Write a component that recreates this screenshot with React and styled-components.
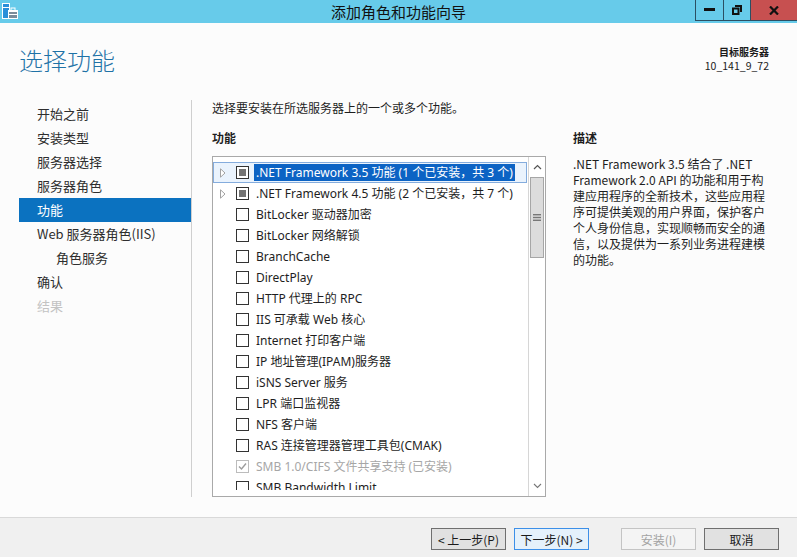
import React from 'react'
import styled, { createGlobalStyle } from 'styled-components'

const GlobalStyle = createGlobalStyle`
  html, body {
    margin: 0;
    padding: 0;
  }
  body {
    font-family: "Segoe UI", "Noto Sans", "Noto Sans CJK SC", sans-serif;
    color: #1e1e1e;
  }
`

const Window = styled.div`
  width: 797px;
  height: 557px;
  display: flex;
  flex-direction: column;
  background: #fcfcfc;
  overflow: hidden;
`

const TitleBar = styled.div`
  height: 23px;
  flex: none;
  background: #67cbea;
  display: grid;
  grid-template-columns: 1fr auto 1fr;
  align-items: start;
`

const AppIcon = styled.div`
  padding: 2px 0 0 1px;
  height: 19px;
`

const Title = styled.div`
  font-family: "Noto Sans CJK SC", sans-serif;
  font-size: 15px;
  line-height: 23px;
  color: #111;
`

const Controls = styled.div`
  justify-self: end;
  display: flex;
  height: 20px;
  border-bottom: 1px solid #2b4f63;
  border-left: 1px solid #2b4f63;
`

const CtrlButton = styled.div`
  width: ${p => p.$w}px;
  height: 20px;
  display: flex;
  align-items: center;
  justify-content: center;
  background: ${p => (p.$close ? '#c75050' : 'transparent')};
  border-right: ${p => (p.$close ? 'none' : '1px solid #2b4f63')};
`

const Main = styled.div`
  flex: 1;
  display: flex;
  flex-direction: column;
  min-height: 0;
`

const Header = styled.div`
  height: 77px;
  flex: none;
  display: flex;
  justify-content: space-between;
  align-items: flex-start;
  padding: 0 28px 0 19px;
  box-sizing: border-box;
`

const Heading = styled.h1`
  margin: 22px 0 0;
  font-family: "Noto Sans CJK SC", sans-serif;
  font-weight: 300;
  font-size: 24px;
  line-height: 30px;
  color: #1f72a6;
`

const Target = styled.div`
  margin-top: 22px;
  text-align: right;
  font-family: "Noto Sans CJK SC", sans-serif;
  color: #1a1a1a;
`

const TargetLabel = styled.div`
  font-weight: 700;
  font-size: 10px;
  line-height: 14px;
`

const TargetName = styled.div`
  font-size: 10.5px;
  line-height: 13px;
`

const Body = styled.div`
  flex: 1;
  display: flex;
  padding-bottom: 20px;
  min-height: 0;
`

const Nav = styled.nav`
  margin-left: 19px;
  width: 172px;
  flex: none;
  border-right: 1px solid #cfcfcf;
  padding-top: 2px;
`

const NavItem = styled.div`
  height: 24px;
  line-height: 24px;
  font-size: 13px;
  padding-left: ${p => (p.$sub ? 37 : 18)}px;
  font-family: "Noto Sans CJK SC", sans-serif;
  color: ${p => (p.$active ? '#fff' : p.$disabled ? '#c3c3c3' : '#2e2e2e')};
  background: ${p => (p.$active ? '#0b72c0' : 'transparent')};
`

const Content = styled.div`
  flex: 1;
  padding-left: 20px;
  display: flex;
  flex-direction: column;
  min-height: 0;
`

const Intro = styled.div`
  font-family: "Noto Sans CJK SC", sans-serif;
  font-size: 12px;
  line-height: 16px;
`

const Columns = styled.div`
  flex: 1;
  display: flex;
  gap: 27px;
  margin-top: 14px;
  min-height: 0;
`

const FeatureCol = styled.div`
  width: 334px;
  display: flex;
  flex-direction: column;
`

const DescCol = styled.div`
  width: 200px;
`

const ColHead = styled.div`
  font-family: "Noto Sans CJK SC", sans-serif;
  font-weight: 700;
  font-size: 12px;
  line-height: 16px;
  margin-bottom: 10px;
`

const ListBox = styled.div`
  flex: 1;
  border: 1px solid #a9a9a9;
  display: flex;
  overflow: hidden;
  background: #fff;
`

const Rows = styled.div`
  flex: 1;
  margin: 5px 0 6px;
  overflow: hidden;
`

const Row = styled.div`
  height: 21px;
  box-sizing: border-box;
  display: flex;
  align-items: center;
  padding-left: 4px;
  border: 1px solid ${p => (p.$selected ? '#84acdd' : 'transparent')};
  background: ${p => (p.$selected ? '#eaf3fd' : 'transparent')};
  margin-right: 1px;
`

const Expander = styled.div`
  width: 18px;
  flex: none;
  display: flex;
  align-items: center;
  padding-left: 2px;
  box-sizing: border-box;
`

const Box = styled.div`
  width: 13px;
  height: 13px;
  box-sizing: border-box;
  flex: none;
  border: 1px solid ${p => (p.$disabled ? '#bcbcbc' : '#333')};
  background: #fff;
  display: flex;
  align-items: center;
  justify-content: center;
`

const Mixed = styled.div`
  width: 7px;
  height: 7px;
  background: #737373;
`

const Label = styled.span`
  margin-left: 5px;
  padding: 0 2px;
  font-size: 12px;
  line-height: 17px;
  white-space: nowrap;
  color: ${p => (p.$selected ? '#fff' : p.$disabled ? '#a6a6a6' : '#1e1e1e')};
  background: ${p => (p.$selected ? '#0c63c4' : 'transparent')};
`

const ScrollBar = styled.div`
  width: 16px;
  flex: none;
  border-left: 1px solid #d6d6d6;
  display: flex;
  flex-direction: column;
  background: #fff;
`

const ArrowBtn = styled.div`
  height: 20px;
  flex: none;
  display: flex;
  align-items: center;
  justify-content: center;
`

const Track = styled.div`
  flex: 1;
`

const Thumb = styled.div`
  height: 81px;
  margin: 0 1px;
  background: #dcdcdc;
  border: 1px solid #a6a6a6;
  box-sizing: border-box;
  display: flex;
  align-items: center;
  justify-content: center;
`

const DescText = styled.p`
  margin: 0;
  font-family: "Noto Sans CJK SC", sans-serif;
  font-size: 12px;
  line-height: 16px;
  color: #1e1e1e;
  white-space: pre-line;
`

const Footer = styled.div`
  height: 40px;
  flex: none;
  box-sizing: border-box;
  border-top: 1px solid #d9d9d9;
  background: #f0f0f0;
  display: flex;
  justify-content: flex-end;
  align-items: flex-start;
  padding: 10px 18px 0 0;
`

const Btn = styled.button`
  width: 75px;
  height: 22px;
  box-sizing: border-box;
  margin-left: ${p => p.$gap}px;
  font-family: "Noto Sans CJK SC", sans-serif;
  font-size: 12px;
  padding: 0;
  border: 1px solid ${p => (p.$focus ? '#3c8fe8' : p.$disabled ? '#c4c4c4' : '#6f6f6f')};
  background: ${p => (p.$focus ? '#e5f1fb' : p.$disabled ? '#f4f4f4' : '#e1e1e1')};
  color: ${p => (p.$disabled ? '#a3a3a3' : '#1a1a1a')};
`

const features = [
  { label: '.NET Framework 3.5 功能 (1 个已安装，共 3 个)', expand: true, state: 'mixed', selected: true },
  { label: '.NET Framework 4.5 功能 (2 个已安装，共 7 个)', expand: true, state: 'mixed' },
  { label: 'BitLocker 驱动器加密' },
  { label: 'BitLocker 网络解锁' },
  { label: 'BranchCache' },
  { label: 'DirectPlay' },
  { label: 'HTTP 代理上的 RPC' },
  { label: 'IIS 可承载 Web 核心' },
  { label: 'Internet 打印客户端' },
  { label: 'IP 地址管理(IPAM)服务器' },
  { label: 'iSNS Server 服务' },
  { label: 'LPR 端口监视器' },
  { label: 'NFS 客户端' },
  { label: 'RAS 连接管理器管理工具包(CMAK)' },
  { label: 'SMB 1.0/CIFS 文件共享支持 (已安装)', state: 'installed' },
  { label: 'SMB Bandwidth Limit' },
]

const steps = [
  { name: '开始之前' },
  { name: '安装类型' },
  { name: '服务器选择' },
  { name: '服务器角色' },
  { name: '功能', active: true },
  { name: 'Web 服务器角色(IIS)' },
  { name: '角色服务', sub: true },
  { name: '确认' },
  { name: '结果', disabled: true },
]

const description = `.NET Framework 3.5 结合了 .NET
Framework 2.0 API 的功能和用于构
建应用程序的全新技术，这些应用程
序可提供美观的用户界面，保护客户
个人身份信息，实现顺畅而安全的通
信，以及提供为一系列业务进程建模
的功能。`

function ServerIcon() {
  return (
    <svg width="20" height="18" viewBox="0 0 20 18">
      <rect x="1" y="1" width="8" height="16" fill="#fff" />
      <rect x="2" y="2" width="6" height="14" fill="#2a8fd9" />
      <rect x="2" y="5" width="6" height="1" fill="#fff" />
      <rect x="7" y="8" width="10" height="9" fill="#fff" />
      <rect x="8" y="10" width="8" height="6" fill="#7b8c9a" />
      <rect x="10" y="6" width="4" height="3" fill="none" stroke="#fff" strokeWidth="1" />
      <rect x="8" y="12" width="8" height="1" fill="#fff" />
    </svg>
  )
}

function Triangle() {
  return (
    <svg width="6" height="10" viewBox="0 0 6 10">
      <path d="M0.5 0.8 L5 5 L0.5 9.2 Z" fill="#fff" stroke="#a2a2a2" strokeWidth="1" />
    </svg>
  )
}

function Check() {
  return (
    <svg width="9" height="9" viewBox="0 0 9 9">
      <path d="M1 4.5 L3.5 7 L8 1.5" fill="none" stroke="#9c9c9c" strokeWidth="1.4" />
    </svg>
  )
}

function Feature({ item }) {
  return (
    <Row $selected={item.selected}>
      <Expander>{item.expand && <Triangle />}</Expander>
      <Box $disabled={item.state === 'installed'}>
        {item.state === 'mixed' && <Mixed />}
        {item.state === 'installed' && <Check />}
      </Box>
      <Label $selected={item.selected} $disabled={item.state === 'installed'}>
        {item.label}
      </Label>
    </Row>
  )
}

export default function App() {
  return (
    <>
      <GlobalStyle />
      <Window>
        <TitleBar>
          <AppIcon>
            <ServerIcon />
          </AppIcon>
          <Title>添加角色和功能向导</Title>
          <Controls>
            <CtrlButton $w={27}>
              <svg width="11" height="4" viewBox="0 0 11 4">
                <rect x="0" y="0" width="11" height="3" fill="#111" />
              </svg>
            </CtrlButton>
            <CtrlButton $w={26}>
              <svg width="10" height="10" viewBox="0 0 10 10">
                <path d="M3 1 H9 V7" fill="none" stroke="#111" strokeWidth="2" />
                <rect x="1" y="3.5" width="5.5" height="5.5" fill="none" stroke="#111" strokeWidth="2" />
              </svg>
            </CtrlButton>
            <CtrlButton $w={46} $close>
              <svg width="10" height="9" viewBox="0 0 10 9">
                <path d="M1 0.5 L9 8.5 M9 0.5 L1 8.5" stroke="#111" strokeWidth="2.2" />
              </svg>
            </CtrlButton>
          </Controls>
        </TitleBar>

        <Main>
          <Header>
            <Heading>选择功能</Heading>
            <Target>
              <TargetLabel>目标服务器</TargetLabel>
              <TargetName>10_141_9_72</TargetName>
            </Target>
          </Header>

          <Body>
            <Nav>
              {steps.map(s => (
                <NavItem key={s.name} $active={s.active} $sub={s.sub} $disabled={s.disabled}>
                  {s.name}
                </NavItem>
              ))}
            </Nav>

            <Content>
              <Intro>选择要安装在所选服务器上的一个或多个功能。</Intro>
              <Columns>
                <FeatureCol>
                  <ColHead>功能</ColHead>
                  <ListBox>
                    <Rows>
                      {features.map(f => (
                        <Feature key={f.label} item={f} />
                      ))}
                    </Rows>
                    <ScrollBar>
                      <ArrowBtn>
                        <svg width="9" height="6" viewBox="0 0 9 6">
                          <path d="M1 5 L4.5 1.5 L8 5" fill="none" stroke="#555" strokeWidth="1.2" />
                        </svg>
                      </ArrowBtn>
                      <Thumb>
                        <svg width="8" height="7" viewBox="0 0 8 7">
                          <rect x="0" y="0" width="8" height="1.4" fill="#777" />
                          <rect x="0" y="2.8" width="8" height="1.4" fill="#777" />
                          <rect x="0" y="5.6" width="8" height="1.4" fill="#777" />
                        </svg>
                      </Thumb>
                      <Track />
                      <ArrowBtn>
                        <svg width="9" height="6" viewBox="0 0 9 6">
                          <path d="M1 1 L4.5 4.5 L8 1" fill="none" stroke="#777" strokeWidth="1.1" />
                        </svg>
                      </ArrowBtn>
                    </ScrollBar>
                  </ListBox>
                </FeatureCol>
                <DescCol>
                  <ColHead>描述</ColHead>
                  <DescText>{description}</DescText>
                </DescCol>
              </Columns>
            </Content>
          </Body>
        </Main>

        <Footer>
          <Btn $gap={0}>&lt; 上一步(P)</Btn>
          <Btn $gap={8} $focus>下一步(N) &gt;</Btn>
          <Btn $gap={32} $disabled>安装(I)</Btn>
          <Btn $gap={8}>取消</Btn>
        </Footer>
      </Window>
    </>
  )
}
